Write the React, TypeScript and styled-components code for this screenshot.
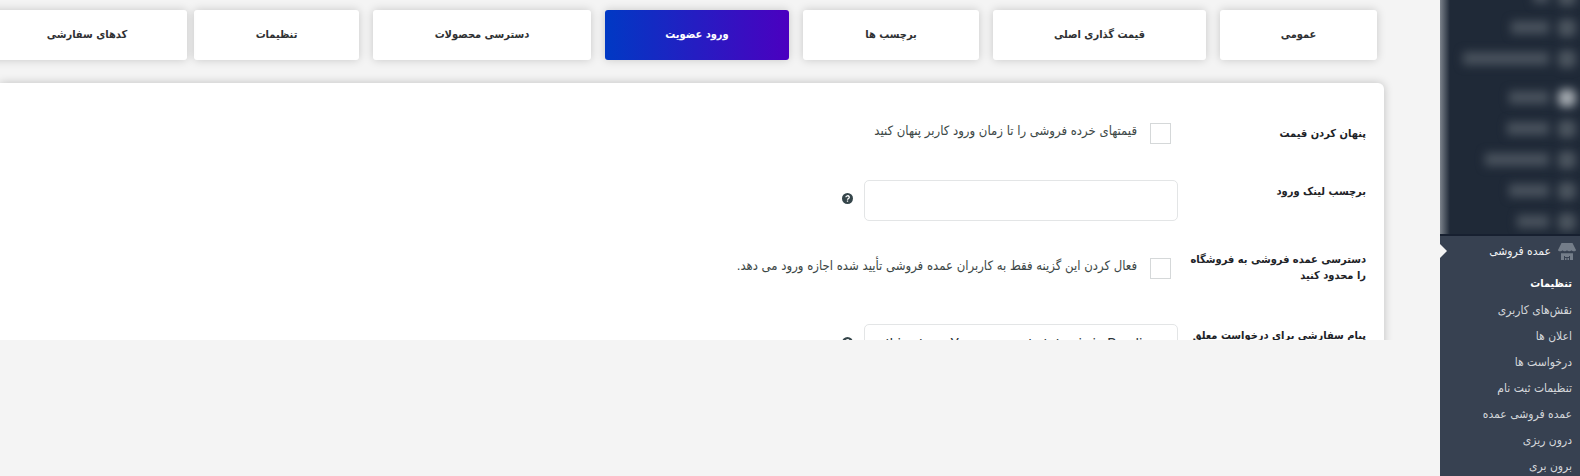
import React from "react";
import styled, { createGlobalStyle } from "styled-components";

const Global = createGlobalStyle`
  * { box-sizing: border-box; }
  html, body { margin: 0; background: #f4f4f4; overflow: hidden; }
  body, button, input, textarea { font-family: "DejaVu Sans Condensed", "DejaVu Sans", sans-serif; }
`;

const Page = styled.div`
  direction: rtl;
  display: flex;
  height: 100vh;
  overflow: hidden;
  background: #f4f4f4;
`;

const Sidebar = styled.nav`
  flex: 0 0 140px;
  display: flex;
  flex-direction: column;
  background: #374151;
`;

const HiddenMenu = styled.div`
  display: flex;
  flex-direction: column;
  flex: 0 0 236px;
  background: linear-gradient(90deg, #7b828b 0, #1f2937 10px);
  border-bottom: 2px solid #172030;
  overflow: hidden;
`;

const HiddenItem = styled.div<{ $gap?: number }>`
  flex: none;
  display: flex;
  align-items: center;
  gap: 9px;
  height: 31px;
  margin-top: ${(p) => p.$gap ?? 0}px;
  padding-right: 4px;
  filter: blur(5px);
`;

const HiddenIcon = styled.span<{ $bright?: boolean }>`
  width: 18px;
  height: 18px;
  border-radius: 6px;
  background: ${(p) => (p.$bright ? "#a3a9af" : "#4c555f")};
`;

const HiddenText = styled.span<{ $w: number }>`
  width: ${(p) => p.$w}px;
  height: 13px;
  background: #49525d;
`;

const Current = styled.a`
  position: relative;
  flex: none;
  display: flex;
  align-items: center;
  gap: 7px;
  height: 30px;
  padding-right: 4px;
  color: #f0f1f3;
  font-size: 12px;
  text-decoration: none;
  &::after {
    content: "";
    position: absolute;
    left: 0;
    top: 8px;
    border: 7px solid transparent;
    border-left-color: #f4f4f4;
    border-right-width: 0;
  }
`;

const SubMenu = styled.ul`
  list-style: none;
  margin: 0;
  padding: 5px 8px 0 0;
`;

const SubLink = styled.a<{ $active?: boolean }>`
  display: block;
  height: 26px;
  line-height: 26px;
  font-size: ${(p) => (p.$active ? 11 : 12)}px;
  white-space: nowrap;
  text-decoration: none;
  color: ${(p) => (p.$active ? "#ffffff" : "#d3d6da")};
  font-weight: ${(p) => (p.$active ? 700 : 400)};
`;

const Main = styled.main`
  flex: 1;
  min-width: 0;
  padding-right: 40px;
`;

const Content = styled.div`
  height: 340px;
  overflow: hidden;
  padding-right: 16px;
`;

const Tabs = styled.div`
  display: flex;
  gap: 14px;
  padding: 10px 7px 23px 0;
`;

const Tab = styled.button<{ $w: number; $active?: boolean }>`
  flex: 0 0 ${(p) => p.$w}px;
  height: 50px;
  padding: 0 0 2px;
  border: 0;
  border-radius: 3px;
  font-size: 11px;
  font-weight: 700;
  color: ${(p) => (p.$active ? "#fff" : "#2f3133")};
  background: ${(p) => (p.$active ? "linear-gradient(90deg, #0039c4, #4b00c0)" : "#fff")};
  box-shadow: 0 0 10px rgba(0, 0, 0, 0.18);
  &:last-child { margin-right: -7px; }
`;

const Panel = styled.form`
  padding: 35px 18px 0 0;
  background: #fff;
  border-radius: 0 6px 0 0;
  box-shadow: 0 0 10px rgba(0, 0, 0, 0.22);
  min-height: 300px;
`;

const Row = styled.div<{ $gap?: number; $center?: boolean }>`
  display: flex;
  align-items: ${(p) => (p.$center ? "center" : "flex-start")};
  min-height: 31px;
  margin-bottom: ${(p) => p.$gap ?? 0}px;
`;

const Label = styled.label<{ $top?: boolean }>`
  flex: 0 0 188px;
  padding: ${(p) => (p.$top ? 4 : 0)}px 0 0 6px;
  font-size: 11px;
  font-weight: 700;
  line-height: 16px;
  color: #1d2327;
`;

const CheckLabel = styled.label`
  display: flex;
  gap: 13px;
  padding-right: 7px;
  font-size: 13px;
  line-height: 16px;
  white-space: nowrap;
  color: #3c4746;
`;

const Check = styled.input`
  appearance: none;
  width: 21px;
  height: 21px;
  margin: 0;
  border: 1px solid #d5d8d9;
  background: #fff;
`;

const Field = styled.input`
  width: 314px;
  height: 41px;
  padding: 0 12px;
  border: 1px solid #e3e5e6;
  border-radius: 5px;
  background: #fff;
`;

const Area = styled.textarea`
  width: 314px;
  height: 70px;
  padding: 11px 19px;
  border: 1px solid #e3e5e6;
  border-radius: 5px;
  resize: none;
  overflow: hidden;
  white-space: nowrap;
  font-family: Roboto, sans-serif;
  font-size: 14px;
  color: #2c3338;
`;

const Help = styled.svg`
  width: 11px;
  height: 11px;
  margin: 13px 11px 0 0;
`;

const HelpIcon = () => (
  <Help viewBox="0 0 11 11">
    <circle cx="5.5" cy="5.5" r="5.5" fill="#35454a" />
    <path d="M3.9 4.3a1.7 1.5 0 1 1 2.5 1.3c-.6.3-.9.5-.9 1.1M5.5 7.5v1.3" fill="none" stroke="#fff" strokeWidth="1.3" />
  </Help>
);

const StoreIcon = () => (
  <svg width="18" height="18" viewBox="0 0 18 18" fill="#747d89">
    <path d="M3.5 1h11L18 8c0 1.7-3.5 1.7-4.5.3-1 1.4-3.5 1.4-4.5 0-1 1.4-3.5 1.4-4.5 0C3.5 9.7 0 9.700 0 8z" />
    <path d="M3 11.2h12V18h-3v-4H11v1H7v-1H6v4H3zM7 16h1.5v2H7zM9.5 16H11v2H9.5z" />
  </svg>
);

const tabs = [
  { t: "عمومی", w: 157 },
  { t: "قیمت گذاری اصلی", w: 213 },
  { t: "برچسب ها", w: 176 },
  { t: "ورود عضویت", w: 184, active: true },
  { t: "دسترسی محصولات", w: 218 },
  { t: "تنظیمات", w: 165 },
  { t: "کدهای سفارشی", w: 200 },
];

const hidden = [
  { w: 16, gap: -19 },
  { w: 38 },
  { w: 86 },
  { w: 40, gap: 8, bright: true },
  { w: 42 },
  { w: 64 },
  { w: 40 },
  { w: 32 },
];

const links = ["تنظیمات", "نقش‌های کاربری", "اعلان ها", "درخواست ها", "تنظیمات ثبت نام", "عمده فروشی عمده", "درون ریزی", "برون بری"];

export default function App() {
  return (
    <Page lang="fa">
      <Global />
      <Sidebar>
        <HiddenMenu aria-hidden="true">
          {hidden.map((h, i) => (
            <HiddenItem key={i} $gap={h.gap}>
              <HiddenIcon $bright={h.bright} />
              <HiddenText $w={h.w} />
            </HiddenItem>
          ))}
        </HiddenMenu>
        <Current href="#store"><StoreIcon />عمده فروشی</Current>
        <SubMenu>
          {links.map((l, i) => (
            <li key={l}><SubLink href={`#s${i}`} $active={i === 0}>{l}</SubLink></li>
          ))}
        </SubMenu>
      </Sidebar>
      <Main>
        <Content>
          <Tabs>
            {tabs.map((t) => (
              <Tab key={t.t} type="button" $w={t.w} $active={t.active}>{t.t}</Tab>
            ))}
          </Tabs>
          <Panel>
            <Row $center $gap={31}>
              <Label htmlFor="hide">پنهان کردن قیمت</Label>
              <CheckLabel><Check id="hide" type="checkbox" />قیمتهای خرده فروشی را تا زمان ورود کاربر پنهان کنید</CheckLabel>
            </Row>
            <Row $gap={31}>
              <Label $top htmlFor="link">برچسب لینک ورود</Label>
              <Field id="link" type="text" />
              <HelpIcon />
            </Row>
            <Row $center $gap={40}>
              <Label htmlFor="limit">دسترسی عمده فروشی به فروشگاه را محدود کنید</Label>
              <CheckLabel><Check id="limit" type="checkbox" />فعال کردن این گزینه فقط به کاربران عمده فروشی تأیید شده اجازه ورود می دهد.</CheckLabel>
            </Row>
            <Row>
              <Label $top htmlFor="msg">پیام سفارشی برای درخواست معلق</Label>
              <Area id="msg" defaultValue="this store. Your account status is in Pending" />
              <HelpIcon />
            </Row>
          </Panel>
        </Content>
      </Main>
    </Page>
  );
}
